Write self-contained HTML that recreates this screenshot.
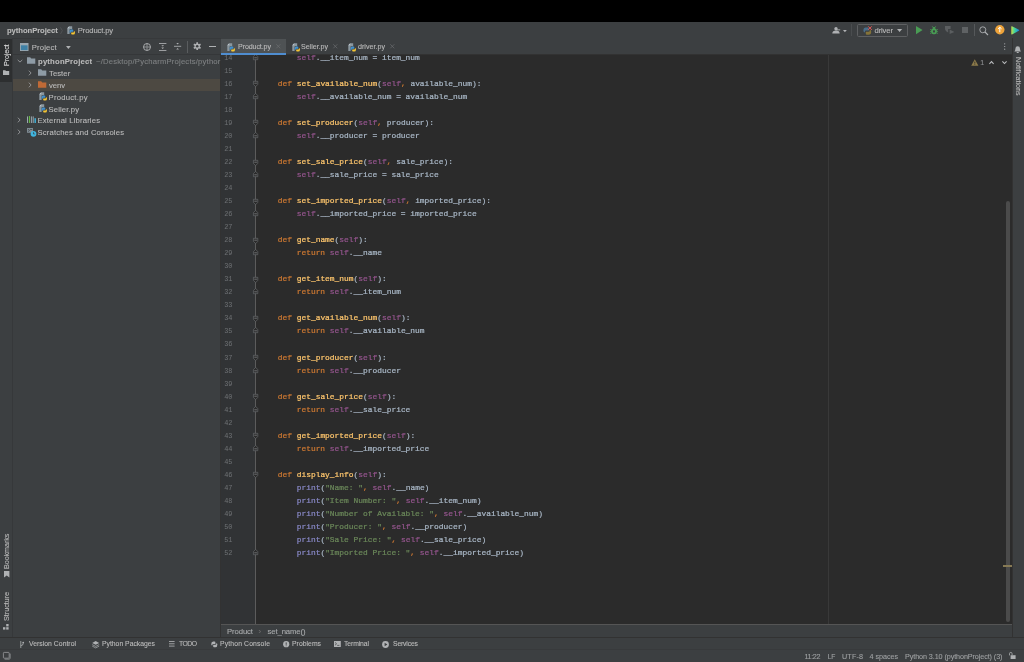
<!DOCTYPE html>
<html><head><meta charset="utf-8"><title>pythonProject – Product.py</title>
<style>
html,body{margin:0;padding:0;background:#3c3f41;}
body{width:1024px;height:662px;overflow:hidden;position:relative;font-family:"Liberation Sans",sans-serif;}
#app{position:absolute;left:0;top:0;width:1024px;height:662px;will-change:transform;}
.r{position:absolute;}
.t{-webkit-text-stroke:0.1px currentColor;position:absolute;white-space:nowrap;line-height:12px;height:12px;font-family:"Liberation Sans",sans-serif;}
.v{line-height:12px;}
.ln{position:absolute;left:0;width:11.5px;text-align:right;font-family:"Liberation Mono",monospace;font-size:6.9px;line-height:12px;color:#6e7174;white-space:pre;}
.cl{position:absolute;left:37.8px;font-family:"Liberation Mono",monospace;font-size:7.9px;line-height:12px;color:#a9b7c6;white-space:pre;letter-spacing:0.0px;-webkit-text-stroke:0.22px currentColor;}
.cl i{font-style:normal;}
.k{color:#cc7832;} .s{color:#94558d;} .f{color:#ffc66d;} .b{color:#8888c6;} .g{color:#6a8759;}
svg{position:absolute;overflow:visible;}
</style></head>
<body><div id="app">
<div class="r" style="left:0px;top:0px;width:1024px;height:22px;background:#000;"></div>
<div class="r" style="left:0px;top:22px;width:1024px;height:640px;background:#3c3f41;"></div>
<div class="r" style="left:0px;top:37.5px;width:1024px;height:0.7px;background:#37393b;"></div>
<div class="r" style="left:0px;top:38.2px;width:12px;height:599px;background:#3c3f41;"></div>
<div class="r" style="left:12px;top:38.2px;width:0.6px;height:599px;background:#36383a;"></div>
<div class="r" style="left:0px;top:38.5px;width:12px;height:43.0px;background:#2d2f30;"></div>
<div class="r" style="left:1012px;top:38.2px;width:12px;height:599px;background:#3c3f41;"></div>
<div class="r" style="left:1011.6px;top:38.2px;width:0.6px;height:599px;background:#323232;"></div>
<div class="r" style="left:12.6px;top:54.2px;width:208px;height:0.6px;background:#353739;"></div>
<div class="r" style="left:220.4px;top:54.8px;width:0.6px;height:582.4px;background:#323232;"></div>
<div class="r" style="left:12.6px;top:79.1px;width:207.8px;height:11.85px;background:#4d4942;"></div>
<div class="r" style="left:221px;top:38.2px;width:790.6px;height:16.5px;background:#3c3f41;"></div>
<div class="r" style="left:221px;top:54.4px;width:790.6px;height:0.6px;background:#323232;"></div>
<div class="r" style="left:221px;top:38.7px;width:65px;height:15.7px;background:#4e5254;"></div>
<div class="r" style="left:221px;top:53px;width:65px;height:1.9px;background:#4f8dd0;"></div>
<div class="r" style="left:221px;top:55px;width:790.6px;height:569.3px;background:#2b2b2b;"></div>
<div class="r" style="left:221px;top:55px;width:34.4px;height:569.3px;background:#313335;"></div>
<div class="r" style="left:255.2px;top:55px;width:0.6px;height:569.3px;background:#5c5c5c;"></div>
<div class="r" style="left:828.2px;top:55px;width:0.6px;height:569.3px;background:#393939;"></div>
<div class="r" style="left:1006px;top:201.4px;width:4.3px;height:421px;background:#4b4b4b;border-radius:2px;"></div>
<div class="r" style="left:1003px;top:565.1px;width:8.6px;height:1.5px;background:#877a55;"></div>
<div class="r" style="left:221px;top:624.1px;width:790.6px;height:0.7px;background:#555555;"></div>
<div class="r" style="left:221px;top:624.8px;width:790.6px;height:12.2px;background:#3c3f41;"></div>
<div class="r" style="left:0px;top:637.1px;width:1024px;height:0.7px;background:#323232;"></div>
<div class="r" style="left:0px;top:648.9px;width:1024px;height:0.6px;background:#383a3c;"></div>
<span id="nav1" class="t" style="left:7px;top:24.80px;font-size:7.7px;color:#bbbbbb;font-weight:bold;letter-spacing:-0.082px;">pythonProject</span>
<span id="nav2" class="t" style="left:77.8px;top:24.80px;font-size:7.7px;color:#bbbbbb;font-weight:normal;letter-spacing:-0.151px;">Product.py</span>
<span id="ph" class="t" style="left:31.8px;top:41.80px;font-size:7.7px;color:#bbbbbb;font-weight:normal;letter-spacing:0.146px;">Project</span>
<span id="tr0" class="t" style="left:38px;top:56.10px;font-size:7.7px;color:#bbbbbb;font-weight:bold;letter-spacing:0.192px;">pythonProject</span>
<span id="tr0p" class="t" style="left:96px;top:56.10px;font-size:7.7px;color:#7f8183;font-weight:normal;letter-spacing:0.187px;">~/Desktop/PycharmProjects/pythor</span>
<span id="tr1" class="t" style="left:49px;top:67.95px;font-size:7.7px;color:#bbbbbb;font-weight:normal;letter-spacing:0.053px;">Tester</span>
<span id="tr2" class="t" style="left:49px;top:79.80px;font-size:7.7px;color:#bbbbbb;font-weight:normal;letter-spacing:-0.082px;">venv</span>
<span id="tr3" class="t" style="left:48.5px;top:91.65px;font-size:7.7px;color:#bbbbbb;font-weight:normal;letter-spacing:0.250px;">Product.py</span>
<span id="tr4" class="t" style="left:48.5px;top:103.50px;font-size:7.7px;color:#bbbbbb;font-weight:normal;letter-spacing:0.127px;">Seller.py</span>
<span id="tr5" class="t" style="left:37.5px;top:115.35px;font-size:7.7px;color:#bbbbbb;font-weight:normal;letter-spacing:0.157px;">External Libraries</span>
<span id="tr6" class="t" style="left:37.5px;top:127.20px;font-size:7.7px;color:#bbbbbb;font-weight:normal;letter-spacing:0.151px;">Scratches and Consoles</span>
<span id="tab1" class="t" style="left:238px;top:41.10px;font-size:7.1px;color:#bbbbbb;font-weight:normal;letter-spacing:-0.101px;">Product.py</span>
<span id="tab2" class="t" style="left:301px;top:41.10px;font-size:7.1px;color:#bbbbbb;font-weight:normal;letter-spacing:-0.026px;">Seller.py</span>
<span id="tab3" class="t" style="left:358px;top:41.10px;font-size:7.1px;color:#bbbbbb;font-weight:normal;letter-spacing:0.023px;">driver.py</span>
<span id="rc" class="t" style="left:874.5px;top:24.80px;font-size:7.7px;color:#bbbbbb;font-weight:normal;letter-spacing:-0.146px;">driver</span>
<span id="w1" class="t" style="left:980.2px;top:57.40px;font-size:7.0px;color:#8e9092;font-weight:normal;letter-spacing:0.000px;">1</span>
<span id="bc1" class="t" style="left:227px;top:626.00px;font-size:7.7px;color:#a9abad;font-weight:normal;letter-spacing:-0.083px;">Product</span>
<span id="bcs" class="t" style="left:258.5px;top:626.00px;font-size:8px;color:#6e6e6e;font-weight:normal;letter-spacing:0.000px;">›</span>
<span id="bc2" class="t" style="left:267.5px;top:626.00px;font-size:7.7px;color:#a9abad;font-weight:normal;letter-spacing:-0.098px;">set_name()</span>
<span id="b1" class="t" style="left:29px;top:638.40px;font-size:6.8px;color:#bbbbbb;font-weight:normal;letter-spacing:0.038px;">Version Control</span>
<span id="b2" class="t" style="left:102px;top:638.40px;font-size:6.8px;color:#bbbbbb;font-weight:normal;letter-spacing:0.006px;">Python Packages</span>
<span id="b3" class="t" style="left:179px;top:638.40px;font-size:6.8px;color:#bbbbbb;font-weight:normal;letter-spacing:-0.504px;">TODO</span>
<span id="b4" class="t" style="left:220px;top:638.40px;font-size:6.8px;color:#bbbbbb;font-weight:normal;letter-spacing:0.153px;">Python Console</span>
<span id="b5" class="t" style="left:292px;top:638.40px;font-size:6.8px;color:#bbbbbb;font-weight:normal;letter-spacing:0.041px;">Problems</span>
<span id="b6" class="t" style="left:344px;top:638.40px;font-size:6.8px;color:#bbbbbb;font-weight:normal;letter-spacing:-0.100px;">Terminal</span>
<span id="b7" class="t" style="left:393px;top:638.40px;font-size:6.8px;color:#bbbbbb;font-weight:normal;letter-spacing:-0.153px;">Services</span>
<span id="s1" class="t" style="left:804.5px;top:650.80px;font-size:7.2px;color:#9ea0a2;font-weight:normal;letter-spacing:-0.365px;">11:22</span>
<span id="s2" class="t" style="left:827.8px;top:650.80px;font-size:6.7px;color:#9ea0a2;font-weight:normal;letter-spacing:-0.216px;">LF</span>
<span id="s3" class="t" style="left:842px;top:650.80px;font-size:7.2px;color:#9ea0a2;font-weight:normal;letter-spacing:0.156px;">UTF-8</span>
<span id="s4" class="t" style="left:869.5px;top:650.80px;font-size:7.2px;color:#9ea0a2;font-weight:normal;letter-spacing:-0.040px;">4 spaces</span>
<span id="s5" class="t" style="left:905px;top:650.80px;font-size:7.2px;color:#9ea0a2;font-weight:normal;letter-spacing:-0.080px;">Python 3.10 (pythonProject) (3)</span>
<span id="v1" class="t v" style="left:7.0px;top:66.2px;transform:rotate(-90deg) translateY(-50%);transform-origin:0 0;font-size:7.2px;color:#dddddd;letter-spacing:-0.128px;">Project</span>
<span id="v2" class="t v" style="left:6.7px;top:568.6px;transform:rotate(-90deg) translateY(-50%);transform-origin:0 0;font-size:7.2px;color:#bbbbbb;letter-spacing:-0.082px;">Bookmarks</span>
<span id="v3" class="t v" style="left:6.7px;top:620.6px;transform:rotate(-90deg) translateY(-50%);transform-origin:0 0;font-size:7.2px;color:#bbbbbb;letter-spacing:-0.010px;">Structure</span>
<span id="v4" class="t v" style="left:1017.8px;top:56.5px;transform:rotate(90deg) translateY(-50%);transform-origin:0 0;font-size:7.2px;color:#bbbbbb;letter-spacing:-0.055px;">Notifications</span>
<div id="code" style="position:absolute;left:221px;top:55px;width:790px;height:569px;overflow:hidden;">
<span class="ln" style="top:-3.38px;">14</span>
<span class="cl" style="top:-3.38px;">        <i class="s">self</i>.__item_num = item_num</span>
<span class="ln" style="top:9.66px;">15</span>
<span class="ln" style="top:22.70px;">16</span>
<span class="cl" style="top:22.70px;">    <i class="k">def </i><i class="f">set_available_num</i>(<i class="s">self</i><i class="k">,</i> available_num):</span>
<span class="ln" style="top:35.74px;">17</span>
<span class="cl" style="top:35.74px;">        <i class="s">self</i>.__available_num = available_num</span>
<span class="ln" style="top:48.78px;">18</span>
<span class="ln" style="top:61.82px;">19</span>
<span class="cl" style="top:61.82px;">    <i class="k">def </i><i class="f">set_producer</i>(<i class="s">self</i><i class="k">,</i> producer):</span>
<span class="ln" style="top:74.85px;">20</span>
<span class="cl" style="top:74.85px;">        <i class="s">self</i>.__producer = producer</span>
<span class="ln" style="top:87.89px;">21</span>
<span class="ln" style="top:100.93px;">22</span>
<span class="cl" style="top:100.93px;">    <i class="k">def </i><i class="f">set_sale_price</i>(<i class="s">self</i><i class="k">,</i> sale_price):</span>
<span class="ln" style="top:113.97px;">23</span>
<span class="cl" style="top:113.97px;">        <i class="s">self</i>.__sale_price = sale_price</span>
<span class="ln" style="top:127.01px;">24</span>
<span class="ln" style="top:140.05px;">25</span>
<span class="cl" style="top:140.05px;">    <i class="k">def </i><i class="f">set_imported_price</i>(<i class="s">self</i><i class="k">,</i> imported_price):</span>
<span class="ln" style="top:153.08px;">26</span>
<span class="cl" style="top:153.08px;">        <i class="s">self</i>.__imported_price = imported_price</span>
<span class="ln" style="top:166.12px;">27</span>
<span class="ln" style="top:179.16px;">28</span>
<span class="cl" style="top:179.16px;">    <i class="k">def </i><i class="f">get_name</i>(<i class="s">self</i>):</span>
<span class="ln" style="top:192.20px;">29</span>
<span class="cl" style="top:192.20px;">        <i class="k">return </i><i class="s">self</i>.__name</span>
<span class="ln" style="top:205.24px;">30</span>
<span class="ln" style="top:218.28px;">31</span>
<span class="cl" style="top:218.28px;">    <i class="k">def </i><i class="f">get_item_num</i>(<i class="s">self</i>):</span>
<span class="ln" style="top:231.32px;">32</span>
<span class="cl" style="top:231.32px;">        <i class="k">return </i><i class="s">self</i>.__item_num</span>
<span class="ln" style="top:244.35px;">33</span>
<span class="ln" style="top:257.39px;">34</span>
<span class="cl" style="top:257.39px;">    <i class="k">def </i><i class="f">get_available_num</i>(<i class="s">self</i>):</span>
<span class="ln" style="top:270.43px;">35</span>
<span class="cl" style="top:270.43px;">        <i class="k">return </i><i class="s">self</i>.__available_num</span>
<span class="ln" style="top:283.47px;">36</span>
<span class="ln" style="top:296.51px;">37</span>
<span class="cl" style="top:296.51px;">    <i class="k">def </i><i class="f">get_producer</i>(<i class="s">self</i>):</span>
<span class="ln" style="top:309.55px;">38</span>
<span class="cl" style="top:309.55px;">        <i class="k">return </i><i class="s">self</i>.__producer</span>
<span class="ln" style="top:322.59px;">39</span>
<span class="ln" style="top:335.62px;">40</span>
<span class="cl" style="top:335.62px;">    <i class="k">def </i><i class="f">get_sale_price</i>(<i class="s">self</i>):</span>
<span class="ln" style="top:348.66px;">41</span>
<span class="cl" style="top:348.66px;">        <i class="k">return </i><i class="s">self</i>.__sale_price</span>
<span class="ln" style="top:361.70px;">42</span>
<span class="ln" style="top:374.74px;">43</span>
<span class="cl" style="top:374.74px;">    <i class="k">def </i><i class="f">get_imported_price</i>(<i class="s">self</i>):</span>
<span class="ln" style="top:387.78px;">44</span>
<span class="cl" style="top:387.78px;">        <i class="k">return </i><i class="s">self</i>.__imported_price</span>
<span class="ln" style="top:400.82px;">45</span>
<span class="ln" style="top:413.85px;">46</span>
<span class="cl" style="top:413.85px;">    <i class="k">def </i><i class="f">display_info</i>(<i class="s">self</i>):</span>
<span class="ln" style="top:426.89px;">47</span>
<span class="cl" style="top:426.89px;">        <i class="b">print</i>(<i class="g">&quot;Name: &quot;</i><i class="k">,</i> <i class="s">self</i>.__name)</span>
<span class="ln" style="top:439.93px;">48</span>
<span class="cl" style="top:439.93px;">        <i class="b">print</i>(<i class="g">&quot;Item Number: &quot;</i><i class="k">,</i> <i class="s">self</i>.__item_num)</span>
<span class="ln" style="top:452.97px;">49</span>
<span class="cl" style="top:452.97px;">        <i class="b">print</i>(<i class="g">&quot;Number of Available: &quot;</i><i class="k">,</i> <i class="s">self</i>.__available_num)</span>
<span class="ln" style="top:466.01px;">50</span>
<span class="cl" style="top:466.01px;">        <i class="b">print</i>(<i class="g">&quot;Producer: &quot;</i><i class="k">,</i> <i class="s">self</i>.__producer)</span>
<span class="ln" style="top:479.05px;">51</span>
<span class="cl" style="top:479.05px;">        <i class="b">print</i>(<i class="g">&quot;Sale Price: &quot;</i><i class="k">,</i> <i class="s">self</i>.__sale_price)</span>
<span class="ln" style="top:492.09px;">52</span>
<span class="cl" style="top:492.09px;">        <i class="b">print</i>(<i class="g">&quot;Imported Price: &quot;</i><i class="k">,</i> <i class="s">self</i>.__imported_price)</span>
<svg style="left:31.9px;top:-1.38px" width="5.2" height="6" viewBox="0 0 5.2 6"><path d="M0.4 5.7 H4.8 V2.6 L2.6 0.3 L0.4 2.6 Z" fill="#2b2b2b" stroke="#6c6f72" stroke-width="0.65"/><path d="M1.3 3.8 H3.9" stroke="#8a8d90" stroke-width="0.7"/></svg>
<svg style="left:31.9px;top:26.30px" width="5.2" height="6" viewBox="0 0 5.2 6"><path d="M0.4 0.3 H4.8 V3.4 L2.6 5.7 L0.4 3.4 Z" fill="#2b2b2b" stroke="#6c6f72" stroke-width="0.65"/><path d="M1.3 2.2 H3.9" stroke="#8a8d90" stroke-width="0.7"/></svg>
<svg style="left:31.9px;top:37.74px" width="5.2" height="6" viewBox="0 0 5.2 6"><path d="M0.4 5.7 H4.8 V2.6 L2.6 0.3 L0.4 2.6 Z" fill="#2b2b2b" stroke="#6c6f72" stroke-width="0.65"/><path d="M1.3 3.8 H3.9" stroke="#8a8d90" stroke-width="0.7"/></svg>
<svg style="left:31.9px;top:65.42px" width="5.2" height="6" viewBox="0 0 5.2 6"><path d="M0.4 0.3 H4.8 V3.4 L2.6 5.7 L0.4 3.4 Z" fill="#2b2b2b" stroke="#6c6f72" stroke-width="0.65"/><path d="M1.3 2.2 H3.9" stroke="#8a8d90" stroke-width="0.7"/></svg>
<svg style="left:31.9px;top:76.85px" width="5.2" height="6" viewBox="0 0 5.2 6"><path d="M0.4 5.7 H4.8 V2.6 L2.6 0.3 L0.4 2.6 Z" fill="#2b2b2b" stroke="#6c6f72" stroke-width="0.65"/><path d="M1.3 3.8 H3.9" stroke="#8a8d90" stroke-width="0.7"/></svg>
<svg style="left:31.9px;top:104.53px" width="5.2" height="6" viewBox="0 0 5.2 6"><path d="M0.4 0.3 H4.8 V3.4 L2.6 5.7 L0.4 3.4 Z" fill="#2b2b2b" stroke="#6c6f72" stroke-width="0.65"/><path d="M1.3 2.2 H3.9" stroke="#8a8d90" stroke-width="0.7"/></svg>
<svg style="left:31.9px;top:115.97px" width="5.2" height="6" viewBox="0 0 5.2 6"><path d="M0.4 5.7 H4.8 V2.6 L2.6 0.3 L0.4 2.6 Z" fill="#2b2b2b" stroke="#6c6f72" stroke-width="0.65"/><path d="M1.3 3.8 H3.9" stroke="#8a8d90" stroke-width="0.7"/></svg>
<svg style="left:31.9px;top:143.65px" width="5.2" height="6" viewBox="0 0 5.2 6"><path d="M0.4 0.3 H4.8 V3.4 L2.6 5.7 L0.4 3.4 Z" fill="#2b2b2b" stroke="#6c6f72" stroke-width="0.65"/><path d="M1.3 2.2 H3.9" stroke="#8a8d90" stroke-width="0.7"/></svg>
<svg style="left:31.9px;top:155.08px" width="5.2" height="6" viewBox="0 0 5.2 6"><path d="M0.4 5.7 H4.8 V2.6 L2.6 0.3 L0.4 2.6 Z" fill="#2b2b2b" stroke="#6c6f72" stroke-width="0.65"/><path d="M1.3 3.8 H3.9" stroke="#8a8d90" stroke-width="0.7"/></svg>
<svg style="left:31.9px;top:182.76px" width="5.2" height="6" viewBox="0 0 5.2 6"><path d="M0.4 0.3 H4.8 V3.4 L2.6 5.7 L0.4 3.4 Z" fill="#2b2b2b" stroke="#6c6f72" stroke-width="0.65"/><path d="M1.3 2.2 H3.9" stroke="#8a8d90" stroke-width="0.7"/></svg>
<svg style="left:31.9px;top:194.20px" width="5.2" height="6" viewBox="0 0 5.2 6"><path d="M0.4 5.7 H4.8 V2.6 L2.6 0.3 L0.4 2.6 Z" fill="#2b2b2b" stroke="#6c6f72" stroke-width="0.65"/><path d="M1.3 3.8 H3.9" stroke="#8a8d90" stroke-width="0.7"/></svg>
<svg style="left:31.9px;top:221.88px" width="5.2" height="6" viewBox="0 0 5.2 6"><path d="M0.4 0.3 H4.8 V3.4 L2.6 5.7 L0.4 3.4 Z" fill="#2b2b2b" stroke="#6c6f72" stroke-width="0.65"/><path d="M1.3 2.2 H3.9" stroke="#8a8d90" stroke-width="0.7"/></svg>
<svg style="left:31.9px;top:233.32px" width="5.2" height="6" viewBox="0 0 5.2 6"><path d="M0.4 5.7 H4.8 V2.6 L2.6 0.3 L0.4 2.6 Z" fill="#2b2b2b" stroke="#6c6f72" stroke-width="0.65"/><path d="M1.3 3.8 H3.9" stroke="#8a8d90" stroke-width="0.7"/></svg>
<svg style="left:31.9px;top:260.99px" width="5.2" height="6" viewBox="0 0 5.2 6"><path d="M0.4 0.3 H4.8 V3.4 L2.6 5.7 L0.4 3.4 Z" fill="#2b2b2b" stroke="#6c6f72" stroke-width="0.65"/><path d="M1.3 2.2 H3.9" stroke="#8a8d90" stroke-width="0.7"/></svg>
<svg style="left:31.9px;top:272.43px" width="5.2" height="6" viewBox="0 0 5.2 6"><path d="M0.4 5.7 H4.8 V2.6 L2.6 0.3 L0.4 2.6 Z" fill="#2b2b2b" stroke="#6c6f72" stroke-width="0.65"/><path d="M1.3 3.8 H3.9" stroke="#8a8d90" stroke-width="0.7"/></svg>
<svg style="left:31.9px;top:300.11px" width="5.2" height="6" viewBox="0 0 5.2 6"><path d="M0.4 0.3 H4.8 V3.4 L2.6 5.7 L0.4 3.4 Z" fill="#2b2b2b" stroke="#6c6f72" stroke-width="0.65"/><path d="M1.3 2.2 H3.9" stroke="#8a8d90" stroke-width="0.7"/></svg>
<svg style="left:31.9px;top:311.55px" width="5.2" height="6" viewBox="0 0 5.2 6"><path d="M0.4 5.7 H4.8 V2.6 L2.6 0.3 L0.4 2.6 Z" fill="#2b2b2b" stroke="#6c6f72" stroke-width="0.65"/><path d="M1.3 3.8 H3.9" stroke="#8a8d90" stroke-width="0.7"/></svg>
<svg style="left:31.9px;top:339.22px" width="5.2" height="6" viewBox="0 0 5.2 6"><path d="M0.4 0.3 H4.8 V3.4 L2.6 5.7 L0.4 3.4 Z" fill="#2b2b2b" stroke="#6c6f72" stroke-width="0.65"/><path d="M1.3 2.2 H3.9" stroke="#8a8d90" stroke-width="0.7"/></svg>
<svg style="left:31.9px;top:350.66px" width="5.2" height="6" viewBox="0 0 5.2 6"><path d="M0.4 5.7 H4.8 V2.6 L2.6 0.3 L0.4 2.6 Z" fill="#2b2b2b" stroke="#6c6f72" stroke-width="0.65"/><path d="M1.3 3.8 H3.9" stroke="#8a8d90" stroke-width="0.7"/></svg>
<svg style="left:31.9px;top:378.34px" width="5.2" height="6" viewBox="0 0 5.2 6"><path d="M0.4 0.3 H4.8 V3.4 L2.6 5.7 L0.4 3.4 Z" fill="#2b2b2b" stroke="#6c6f72" stroke-width="0.65"/><path d="M1.3 2.2 H3.9" stroke="#8a8d90" stroke-width="0.7"/></svg>
<svg style="left:31.9px;top:389.78px" width="5.2" height="6" viewBox="0 0 5.2 6"><path d="M0.4 5.7 H4.8 V2.6 L2.6 0.3 L0.4 2.6 Z" fill="#2b2b2b" stroke="#6c6f72" stroke-width="0.65"/><path d="M1.3 3.8 H3.9" stroke="#8a8d90" stroke-width="0.7"/></svg>
<svg style="left:31.9px;top:417.45px" width="5.2" height="6" viewBox="0 0 5.2 6"><path d="M0.4 0.3 H4.8 V3.4 L2.6 5.7 L0.4 3.4 Z" fill="#2b2b2b" stroke="#6c6f72" stroke-width="0.65"/><path d="M1.3 2.2 H3.9" stroke="#8a8d90" stroke-width="0.7"/></svg>
<svg style="left:31.9px;top:494.09px" width="5.2" height="6" viewBox="0 0 5.2 6"><path d="M0.4 5.7 H4.8 V2.6 L2.6 0.3 L0.4 2.6 Z" fill="#2b2b2b" stroke="#6c6f72" stroke-width="0.65"/><path d="M1.3 3.8 H3.9" stroke="#8a8d90" stroke-width="0.7"/></svg>
</div>
<svg style="left:67.2px;top:26.1px" width="8" height="8.8" viewBox="0 0 8 8.8"><g opacity="1.0"><path d="M0.3 2.2 L2.2 0.2 L5.2 0.2 L5.2 3.2 L2.6 3.2 L2.6 8 L0.3 8 Z" fill="#8a979f"/><path d="M0.3 2.2 L2.2 2.2 L2.2 0.2 Z" fill="#c3cbd0"/><path d="M2.6 5.6 Q2.6 3.6 4.2 3.6 L5.6 3.6 Q6.3 3.6 6.3 4.4 L6.3 5.7 L4.4 5.7 Q3.6 5.7 3.6 6.6 L3.6 7.2 Q2.6 7.2 2.6 5.6 Z" fill="#3f8fcb"/><path d="M8 6.4 Q8 8.6 6.4 8.6 L5 8.6 Q4.2 8.6 4.2 7.8 L4.2 6.4 L6.2 6.4 Q7 6.4 7 5.5 L7 4.9 Q8 4.9 8 6.4 Z" fill="#f4c534"/></g></svg>
<svg style="left:60.4px;top:26.6px" width="3" height="7.4" viewBox="0 0 3 7.4"><path d="M0.5 0.4 L2.3 3.7 L0.5 7" fill="none" stroke="#5c5e60" stroke-width="0.6"/></svg>
<svg style="left:227.4px;top:42.7px" width="8" height="8.8" viewBox="0 0 8 8.8"><g opacity="1.0"><path d="M0.3 2.2 L2.2 0.2 L5.2 0.2 L5.2 3.2 L2.6 3.2 L2.6 8 L0.3 8 Z" fill="#8a979f"/><path d="M0.3 2.2 L2.2 2.2 L2.2 0.2 Z" fill="#c3cbd0"/><path d="M2.6 5.6 Q2.6 3.6 4.2 3.6 L5.6 3.6 Q6.3 3.6 6.3 4.4 L6.3 5.7 L4.4 5.7 Q3.6 5.7 3.6 6.6 L3.6 7.2 Q2.6 7.2 2.6 5.6 Z" fill="#3f8fcb"/><path d="M8 6.4 Q8 8.6 6.4 8.6 L5 8.6 Q4.2 8.6 4.2 7.8 L4.2 6.4 L6.2 6.4 Q7 6.4 7 5.5 L7 4.9 Q8 4.9 8 6.4 Z" fill="#f4c534"/></g></svg>
<svg style="left:291.9px;top:42.7px" width="8" height="8.8" viewBox="0 0 8 8.8"><g opacity="1.0"><path d="M0.3 2.2 L2.2 0.2 L5.2 0.2 L5.2 3.2 L2.6 3.2 L2.6 8 L0.3 8 Z" fill="#8a979f"/><path d="M0.3 2.2 L2.2 2.2 L2.2 0.2 Z" fill="#c3cbd0"/><path d="M2.6 5.6 Q2.6 3.6 4.2 3.6 L5.6 3.6 Q6.3 3.6 6.3 4.4 L6.3 5.7 L4.4 5.7 Q3.6 5.7 3.6 6.6 L3.6 7.2 Q2.6 7.2 2.6 5.6 Z" fill="#3f8fcb"/><path d="M8 6.4 Q8 8.6 6.4 8.6 L5 8.6 Q4.2 8.6 4.2 7.8 L4.2 6.4 L6.2 6.4 Q7 6.4 7 5.5 L7 4.9 Q8 4.9 8 6.4 Z" fill="#f4c534"/></g></svg>
<svg style="left:348.3px;top:42.7px" width="8" height="8.8" viewBox="0 0 8 8.8"><g opacity="1.0"><path d="M0.3 2.2 L2.2 0.2 L5.2 0.2 L5.2 3.2 L2.6 3.2 L2.6 8 L0.3 8 Z" fill="#8a979f"/><path d="M0.3 2.2 L2.2 2.2 L2.2 0.2 Z" fill="#c3cbd0"/><path d="M2.6 5.6 Q2.6 3.6 4.2 3.6 L5.6 3.6 Q6.3 3.6 6.3 4.4 L6.3 5.7 L4.4 5.7 Q3.6 5.7 3.6 6.6 L3.6 7.2 Q2.6 7.2 2.6 5.6 Z" fill="#3f8fcb"/><path d="M8 6.4 Q8 8.6 6.4 8.6 L5 8.6 Q4.2 8.6 4.2 7.8 L4.2 6.4 L6.2 6.4 Q7 6.4 7 5.5 L7 4.9 Q8 4.9 8 6.4 Z" fill="#f4c534"/></g></svg>
<svg style="left:276.2px;top:44.4px" width="4.6" height="4.6" viewBox="0 0 4.6 4.6"><path d="M0.3 0.3 L4.3 4.3 M4.3 0.3 L0.3 4.3" stroke="#6e7072" stroke-width="0.65"/></svg>
<svg style="left:332.8px;top:44.4px" width="4.6" height="4.6" viewBox="0 0 4.6 4.6"><path d="M0.3 0.3 L4.3 4.3 M4.3 0.3 L0.3 4.3" stroke="#6e7072" stroke-width="0.65"/></svg>
<svg style="left:389.9px;top:44.4px" width="4.6" height="4.6" viewBox="0 0 4.6 4.6"><path d="M0.3 0.3 L4.3 4.3 M4.3 0.3 L0.3 4.3" stroke="#6e7072" stroke-width="0.65"/></svg>
<svg style="left:39.1px;top:92.4px" width="8" height="8.8" viewBox="0 0 8 8.8"><g opacity="1.0"><path d="M0.3 2.2 L2.2 0.2 L5.2 0.2 L5.2 3.2 L2.6 3.2 L2.6 8 L0.3 8 Z" fill="#8a979f"/><path d="M0.3 2.2 L2.2 2.2 L2.2 0.2 Z" fill="#c3cbd0"/><path d="M2.6 5.6 Q2.6 3.6 4.2 3.6 L5.6 3.6 Q6.3 3.6 6.3 4.4 L6.3 5.7 L4.4 5.7 Q3.6 5.7 3.6 6.6 L3.6 7.2 Q2.6 7.2 2.6 5.6 Z" fill="#3f8fcb"/><path d="M8 6.4 Q8 8.6 6.4 8.6 L5 8.6 Q4.2 8.6 4.2 7.8 L4.2 6.4 L6.2 6.4 Q7 6.4 7 5.5 L7 4.9 Q8 4.9 8 6.4 Z" fill="#f4c534"/></g></svg>
<svg style="left:39.1px;top:104.25px" width="8" height="8.8" viewBox="0 0 8 8.8"><g opacity="1.0"><path d="M0.3 2.2 L2.2 0.2 L5.2 0.2 L5.2 3.2 L2.6 3.2 L2.6 8 L0.3 8 Z" fill="#8a979f"/><path d="M0.3 2.2 L2.2 2.2 L2.2 0.2 Z" fill="#c3cbd0"/><path d="M2.6 5.6 Q2.6 3.6 4.2 3.6 L5.6 3.6 Q6.3 3.6 6.3 4.4 L6.3 5.7 L4.4 5.7 Q3.6 5.7 3.6 6.6 L3.6 7.2 Q2.6 7.2 2.6 5.6 Z" fill="#3f8fcb"/><path d="M8 6.4 Q8 8.6 6.4 8.6 L5 8.6 Q4.2 8.6 4.2 7.8 L4.2 6.4 L6.2 6.4 Q7 6.4 7 5.5 L7 4.9 Q8 4.9 8 6.4 Z" fill="#f4c534"/></g></svg>
<svg style="left:27.1px;top:57.2px" width="8.4" height="6.8" viewBox="0 0 8.4 6.8"><path d="M0 0.3 L3.2 0.3 L4.2 1.5 L8.3 1.5 L8.3 6.7 L0 6.7 Z" fill="#8e9ba5"/></svg>
<svg style="left:37.6px;top:69.2px" width="8.4" height="6.8" viewBox="0 0 8.4 6.8"><path d="M0 0.3 L3.2 0.3 L4.2 1.5 L8.3 1.5 L8.3 6.7 L0 6.7 Z" fill="#8e9ba5"/></svg>
<svg style="left:37.6px;top:81.0px" width="8.4" height="6.8" viewBox="0 0 8.4 6.8"><path d="M0 0.3 L3.2 0.3 L4.2 1.5 L8.3 1.5 L8.3 6.7 L0 6.7 Z" fill="#c06a36"/></svg>
<svg style="left:16.5px;top:58.6px" width="6" height="4" viewBox="0 0 6 4"><path d="M0.7 0.9 L3 3.1 L5.3 0.9" fill="none" stroke="#a4a6a8" stroke-width="0.8"/></svg>
<svg style="left:27.6px;top:69.9px" width="4" height="6" viewBox="0 0 4 6"><path d="M0.9 0.7 L3.1 3 L0.9 5.3" fill="none" stroke="#a4a6a8" stroke-width="0.8"/></svg>
<svg style="left:27.6px;top:81.8px" width="4" height="6" viewBox="0 0 4 6"><path d="M0.9 0.7 L3.1 3 L0.9 5.3" fill="none" stroke="#a4a6a8" stroke-width="0.8"/></svg>
<svg style="left:17.2px;top:117.4px" width="4" height="6" viewBox="0 0 4 6"><path d="M0.9 0.7 L3.1 3 L0.9 5.3" fill="none" stroke="#a4a6a8" stroke-width="0.8"/></svg>
<svg style="left:17.2px;top:129.2px" width="4" height="6" viewBox="0 0 4 6"><path d="M0.9 0.7 L3.1 3 L0.9 5.3" fill="none" stroke="#a4a6a8" stroke-width="0.8"/></svg>
<svg style="left:26.7px;top:116.1px" width="9.2" height="7.2" viewBox="0 0 9.2 7.2"><rect x="0" y="0.4" width="1" height="6.6" fill="#9aa7b0"/><rect x="1.9" y="0" width="1.1" height="7" fill="#62b543"/><rect x="3.9" y="0.4" width="1" height="6.6" fill="#9aa7b0"/><rect x="5.7" y="0.4" width="1" height="6.6" fill="#9aa7b0"/><rect x="7.5" y="2.2" width="1.4" height="4.8" fill="#40b6e0"/></svg>
<svg style="left:27px;top:128.2px" width="9.4" height="9" viewBox="0 0 9.4 9"><rect x="0" y="0" width="6" height="4.8" fill="#7f8b93"/><path d="M1 1.2 L2.6 2.4 L1 3.6" stroke="#3c3f41" stroke-width="0.7" fill="none"/><rect x="3.2" y="1.2" width="2" height="0.7" fill="#3c3f41"/><circle cx="6.5" cy="5.8" r="2.9" fill="#40b6e0"/><path d="M6.5 4.2 V6 H7.8" stroke="#3c3f41" stroke-width="0.7" fill="none"/></svg>
<svg style="left:19.9px;top:43px" width="8.5" height="8" viewBox="0 0 8.5 8"><rect x="0" y="0" width="8.5" height="8" fill="#9aa7b0"/><rect x="0.9" y="2.3" width="6.7" height="4.8" fill="#3e80a5"/></svg>
<svg style="left:66.2px;top:46.1px" width="4.8" height="3" viewBox="0 0 4.8 3"><path d="M0 0 L4.8 0 L2.4 2.9 Z" fill="#afb1b3"/></svg>
<svg style="left:143px;top:42.6px" width="8" height="8" viewBox="0 0 8 8"><circle cx="4" cy="4" r="3.5" fill="none" stroke="#afb1b3" stroke-width="0.9"/><circle cx="4" cy="4" r="1.0" fill="none" stroke="#afb1b3" stroke-width="0.6"/><path d="M4 0.5 V2.6 M4 5.4 V7.5 M0.5 4 H2.6 M5.4 4 H7.5" stroke="#afb1b3" stroke-width="0.8"/></svg>
<svg style="left:158.8px;top:43px" width="7.4" height="8" viewBox="0 0 7.4 8"><path d="M0 0.5 H7.4 M0 7.5 H7.4" stroke="#afb1b3" stroke-width="0.85"/><path d="M2.3 2.2 L3.7 3.6 L5.1 2.2 Z M2.3 4.6 L3.7 6 L5.1 4.6 Z" fill="#afb1b3"/></svg>
<svg style="left:174px;top:42.4px" width="7.2" height="8.6" viewBox="0 0 7.2 8.6"><path d="M0 4.3 H7.2" stroke="#afb1b3" stroke-width="0.85"/><path d="M2.3 1 L3.6 2.6 L4.9 1 Z M2.3 7.6 L3.6 6 L4.9 7.6 Z" fill="#afb1b3"/></svg>
<div class="r" style="left:187.2px;top:41px;width:0.6px;height:11.5px;background:#5a5d5f"></div>
<svg style="left:193.3px;top:42.4px" width="8.4" height="8.4" viewBox="0 0 8.4 8.4"><path d="M4.2 4.2 L4.20 0.30 M4.2 4.2 L7.58 2.25 M4.2 4.2 L7.58 6.15 M4.2 4.2 L4.20 8.10 M4.2 4.2 L0.82 6.15 M4.2 4.2 L0.82 2.25" stroke="#afb1b3" stroke-width="1.7"/><circle cx="4.2" cy="4.2" r="2.6" fill="#afb1b3"/><circle cx="4.2" cy="4.2" r="1.3" fill="#3c3f41"/></svg>
<div class="r" style="left:209px;top:46.2px;width:7px;height:0.9px;background:#afb1b3"></div>
<svg style="left:832px;top:27.2px" width="8.4" height="6.6" viewBox="0 0 8.4 6.6"><circle cx="4" cy="1.8" r="1.7" fill="#afb1b3"/><path d="M0.3 6.5 Q0.3 3.6 4 3.6 Q7.7 3.6 7.7 6.5 Z" fill="#afb1b3"/><rect x="4.6" y="2.4" width="3.6" height="0.9" fill="#afb1b3"/></svg>
<svg style="left:842.6px;top:29.6px" width="3.8" height="2.2" viewBox="0 0 3.8 2.2"><path d="M0 0 L3.8 0 L1.9 2.2 Z" fill="#afb1b3"/></svg>
<div class="r" style="left:851.4px;top:24.2px;width:0.6px;height:11.8px;background:#4a4d4f"></div>
<div class="r" style="left:857.4px;top:23.8px;width:48.8px;height:11.4px;border:0.7px solid #5e6062;border-radius:1.6px;"></div>
<svg style="left:863px;top:25.6px" width="9.4" height="9" viewBox="0 0 9.4 9"><g opacity="0.75"><path d="M0.4 4.6 Q0.4 1.6 2.8 1.6 L4.8 1.6 Q5.8 1.6 5.8 2.8 L5.8 4.6 L3 4.6 Q1.9 4.6 1.9 5.8 L1.9 6.6 Q0.4 6.6 0.4 4.6 Z" fill="#4f7ea3"/><path d="M8.2 5.8 Q8.2 8.8 5.8 8.8 L3.8 8.8 Q2.8 8.8 2.8 7.6 L2.8 5.8 L5.6 5.8 Q6.7 5.8 6.7 4.6 L6.7 3.8 Q8.2 3.8 8.2 5.8 Z" fill="#9c8537"/></g><path d="M5.2 0.3 L8.8 3.9 M8.8 0.3 L5.2 3.9" stroke="#e05555" stroke-width="1.0"/></svg>
<svg style="left:896.8px;top:29.2px" width="5.2" height="3" viewBox="0 0 5.2 3"><path d="M0 0 L5.2 0 L2.6 3 Z" fill="#afb1b3"/></svg>
<svg style="left:915.8px;top:26.2px" width="6.6" height="8.2" viewBox="0 0 6.6 8.2"><path d="M0 0 L6.6 4.1 L0 8.2 Z" fill="#499c54"/></svg>
<svg style="left:929.8px;top:25.6px" width="8" height="8.4" viewBox="0 0 8 8.4"><path d="M2.2 0.2 L3.2 1.6 M5.8 0.2 L4.8 1.6" stroke="#499c54" stroke-width="0.7"/><path d="M0 3.4 L1.4 4 M8 3.4 L6.6 4 M0 7.6 L1.4 6.8 M8 7.6 L6.6 6.8 M0 5.5 H8" stroke="#499c54" stroke-width="0.7"/><rect x="1.2" y="2.4" width="5.6" height="5.8" rx="2.2" fill="#499c54"/><rect x="2.6" y="0.9" width="2.8" height="2.2" rx="1" fill="#499c54"/><rect x="3" y="4.4" width="2" height="2" fill="#3c3f41"/></svg>
<svg style="left:945px;top:26.4px" width="9.6" height="8.8" viewBox="0 0 9.6 8.8"><path d="M0 0 H5.6 V3 H3.2 V6.4 Q0 5 0 2.4 Z" fill="#5b5e60"/><path d="M4.6 3.6 L9.4 6 L4.6 8 Z" fill="#5b5e60"/></svg>
<div class="r" style="left:962.1px;top:27px;width:5.9px;height:5.9px;background:#5f6264"></div>
<div class="r" style="left:974.3px;top:24.2px;width:0.6px;height:11.8px;background:#55585a"></div>
<svg style="left:979.4px;top:25.6px" width="10" height="10" viewBox="0 0 10 10"><circle cx="3.8" cy="3.8" r="3" fill="none" stroke="#afb1b3" stroke-width="0.9"/><path d="M6 6 L9 9" stroke="#afb1b3" stroke-width="1.1"/></svg>
<svg style="left:994.7px;top:25.2px" width="9.6" height="9.6" viewBox="0 0 9.6 9.6"><circle cx="4.8" cy="4.8" r="4.7" fill="#eda33a"/><path d="M4.8 2.2 V7.2 M3 3.9 L4.8 2.2 L6.6 3.9" stroke="#fff" stroke-width="1" fill="none"/></svg>
<svg style="left:1011px;top:25.8px" width="8.4" height="8.6" viewBox="0 0 8.4 8.6"><defs><linearGradient id="cg" x1="0" y1="0" x2="1" y2="0"><stop offset="0" stop-color="#c8e04a"/><stop offset="0.45" stop-color="#3bd3a0"/><stop offset="1" stop-color="#1f7fe8"/></linearGradient></defs><path d="M0.3 0.6 Q0.3 0 1 0.2 L7.9 3.8 Q8.4 4.3 7.9 4.8 L1 8.4 Q0.3 8.6 0.3 8 Z" fill="url(#cg)"/></svg>
<svg style="left:1003.8px;top:43.2px" width="1.4" height="7" viewBox="0 0 1.4 7"><circle cx="0.7" cy="0.8" r="0.6" fill="#afb1b3"/><circle cx="0.7" cy="3.5" r="0.6" fill="#afb1b3"/><circle cx="0.7" cy="6.2" r="0.6" fill="#afb1b3"/></svg>
<svg style="left:1014.2px;top:45.6px" width="7.4" height="7.6" viewBox="0 0 7.4 7.6"><path d="M0.4 5.4 Q1.4 4.6 1.4 2.8 Q1.4 0.3 3.7 0.3 Q6 0.3 6 2.8 Q6 4.6 7 5.4 Z" fill="#afb1b3"/><rect x="2.6" y="6" width="2.2" height="1.1" rx="0.5" fill="#afb1b3"/></svg>
<svg style="left:970.6px;top:59.2px" width="7.6" height="7" viewBox="0 0 7.6 7"><path d="M3.8 0.3 L7.4 6.8 L0.2 6.8 Z" fill="#8d7b4a"/><path d="M3.8 2.6 V4.6 M3.8 5.3 V6" stroke="#2b2b2b" stroke-width="0.8"/></svg>
<svg style="left:989.4px;top:61.2px" width="5" height="3" viewBox="0 0 5 3"><path d="M0.4 2.8 L2.5 0.6 L4.6 2.8" stroke="#bbbdbf" stroke-width="1.05" fill="none"/></svg>
<svg style="left:1001.8px;top:61.4px" width="5" height="3" viewBox="0 0 5 3"><path d="M0.4 0.3 L2.5 2.5 L4.6 0.3" stroke="#bbbdbf" stroke-width="1.05" fill="none"/></svg>
<svg style="left:3.2px;top:69.6px" width="6.2" height="5" viewBox="0 0 6.2 5"><path d="M0 0.2 L2.3 0.2 L3 1.1 L6.2 1.1 L6.2 5 L0 5 Z" fill="#afb1b3"/></svg>
<svg style="left:3.6px;top:571.4px" width="5.4" height="6.4" viewBox="0 0 5.4 6.4"><path d="M0 0 H5.4 V6.4 L2.7 4.6 L0 6.4 Z" fill="#afb1b3"/></svg>
<svg style="left:3.4px;top:623.8px" width="5.8" height="5.6" viewBox="0 0 5.8 5.6"><rect x="0" y="3.2" width="2.4" height="2.4" fill="#afb1b3"/><rect x="3.2" y="3.2" width="2.4" height="2.4" fill="#afb1b3"/><rect x="3.2" y="0" width="2.4" height="2.4" fill="#afb1b3"/></svg>
<svg style="left:19.8px;top:640.5px" width="4" height="7" viewBox="0 0 4 7"><path d="M0.8 0 V7 M0.8 4.6 Q3.2 4.6 3.2 2.4" stroke="#afb1b3" stroke-width="0.8" fill="none"/><circle cx="3.2" cy="1.6" r="0.9" fill="#afb1b3"/></svg>
<svg style="left:92px;top:640.5px" width="7.4" height="7" viewBox="0 0 7.4 7"><path d="M3.7 0 L7.2 1.9 L3.7 3.8 L0.2 1.9 Z" fill="#afb1b3"/><path d="M0.2 3.6 L3.7 5.4 L7.2 3.6 M0.2 5.1 L3.7 6.9 L7.2 5.1" stroke="#afb1b3" stroke-width="0.7" fill="none"/></svg>
<svg style="left:169.1px;top:641.1px" width="5.6" height="5.6" viewBox="0 0 5.6 5.6"><path d="M0 0.5 H5.6 M0 2.8 H5.6 M0 5.1 H5.6" stroke="#afb1b3" stroke-width="0.85"/></svg>
<svg style="left:211.2px;top:640.6999999999999px" width="6.6" height="6.6" viewBox="0 0 6.6 6.6"><path d="M0.2 3.3 Q0.2 0.6 2.2 0.6 L3.6 0.6 Q4.4 0.6 4.4 1.4 L4.4 3 L2.2 3 Q1.4 3 1.4 3.8 L1.4 4.6 Q0.2 4.6 0.2 3.3 Z" fill="#afb1b3"/><path d="M6.4 3.5 Q6.4 6.2 4.4 6.2 L3 6.2 Q2.2 6.2 2.2 5.4 L2.2 3.8 L4.4 3.8 Q5.2 3.8 5.2 3 L5.2 2.2 Q6.4 2.2 6.4 3.5 Z" fill="#afb1b3"/></svg>
<svg style="left:282.6px;top:640.6999999999999px" width="6.4" height="6.4" viewBox="0 0 6.4 6.4"><circle cx="3.2" cy="3.2" r="3.1" fill="#afb1b3"/><path d="M3.2 1.4 V3.8 M3.2 4.5 V5.2" stroke="#3c3f41" stroke-width="0.9"/></svg>
<svg style="left:334.1px;top:640.9px" width="6.8" height="6" viewBox="0 0 6.8 6"><rect x="0" y="0" width="6.8" height="6" fill="#afb1b3"/><path d="M1 1.4 L2.6 2.8 L1 4.2" stroke="#3c3f41" stroke-width="0.7" fill="none"/><path d="M3.2 4.4 H5.4" stroke="#3c3f41" stroke-width="0.7"/></svg>
<svg style="left:382.4px;top:640.5px" width="7" height="7" viewBox="0 0 7 7"><circle cx="3.5" cy="3.5" r="3.4" fill="#afb1b3"/><path d="M2.6 1.8 L5.4 3.5 L2.6 5.2 Z" fill="#3c3f41"/></svg>
<svg style="left:3.2px;top:652.1px" width="7.6" height="7.6" viewBox="0 0 7.6 7.6"><rect x="0.4" y="0.4" width="5.8" height="5.8" rx="0.8" fill="none" stroke="#9a9c9e" stroke-width="0.8"/><path d="M7.2 1.6 V6 Q7.2 7.2 6 7.2 H1.6" stroke="#9a9c9e" stroke-width="0.7" fill="none"/></svg>
<svg style="left:1008.6px;top:652.2px" width="6.6" height="7.2" viewBox="0 0 6.6 7.2"><rect x="1.6" y="3.2" width="5" height="3.8" fill="#afb1b3"/><path d="M0.5 3.4 V1.8 Q0.5 0.4 1.8 0.4 Q3.1 0.4 3.1 1.8 V3.2" stroke="#afb1b3" stroke-width="0.8" fill="none"/></svg>
</div></body></html>
